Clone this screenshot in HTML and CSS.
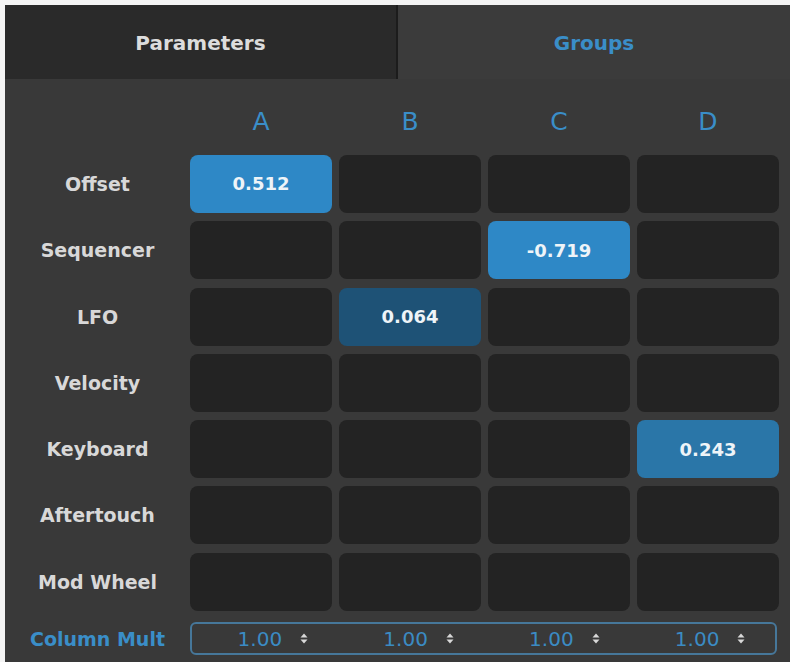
FILE: index.html
```html
<!DOCTYPE html>
<html>
<head>
<meta charset="utf-8">
<link rel="stylesheet" href="styles.css">
</head>
<body>
<div class="panel">
  <div class="tabs">
    <div class="tab tab-params">Parameters</div>
    <div class="tab tab-groups">Groups</div>
  </div>
  <div class="matrix">
    <div class="corner"></div>
    <div class="colhead">A</div>
    <div class="colhead">B</div>
    <div class="colhead">C</div>
    <div class="colhead">D</div>

    <div class="label">Offset</div>
    <div class="cell on bright">0.512</div>
    <div class="cell"></div>
    <div class="cell"></div>
    <div class="cell"></div>

    <div class="label">Sequencer</div>
    <div class="cell"></div>
    <div class="cell"></div>
    <div class="cell on bright">-0.719</div>
    <div class="cell"></div>

    <div class="label">LFO</div>
    <div class="cell"></div>
    <div class="cell on dim">0.064</div>
    <div class="cell"></div>
    <div class="cell"></div>

    <div class="label">Velocity</div>
    <div class="cell"></div>
    <div class="cell"></div>
    <div class="cell"></div>
    <div class="cell"></div>

    <div class="label">Keyboard</div>
    <div class="cell"></div>
    <div class="cell"></div>
    <div class="cell"></div>
    <div class="cell on mid">0.243</div>

    <div class="label">Aftertouch</div>
    <div class="cell"></div>
    <div class="cell"></div>
    <div class="cell"></div>
    <div class="cell"></div>

    <div class="label">Mod Wheel</div>
    <div class="cell"></div>
    <div class="cell"></div>
    <div class="cell"></div>
    <div class="cell"></div>
  </div>
  <div class="multrow">
    <div class="multlabel">Column Mult</div>
    <div class="multbox">
      <div class="mult"><span class="num">1.00</span><svg class="spin" width="8" height="11" viewBox="0 0 8 11"><path d="M4 0.5 L7.5 4.5 L0.5 4.5 Z M4 10.5 L7.5 6.5 L0.5 6.5 Z" fill="#d8d8d8"/></svg></div>
      <div class="mult"><span class="num">1.00</span><svg class="spin" width="8" height="11" viewBox="0 0 8 11"><path d="M4 0.5 L7.5 4.5 L0.5 4.5 Z M4 10.5 L7.5 6.5 L0.5 6.5 Z" fill="#d8d8d8"/></svg></div>
      <div class="mult"><span class="num">1.00</span><svg class="spin" width="8" height="11" viewBox="0 0 8 11"><path d="M4 0.5 L7.5 4.5 L0.5 4.5 Z M4 10.5 L7.5 6.5 L0.5 6.5 Z" fill="#d8d8d8"/></svg></div>
      <div class="mult"><span class="num">1.00</span><svg class="spin" width="8" height="11" viewBox="0 0 8 11"><path d="M4 0.5 L7.5 4.5 L0.5 4.5 Z M4 10.5 L7.5 6.5 L0.5 6.5 Z" fill="#d8d8d8"/></svg></div>
    </div>
  </div>
</div>
</body>
</html>
```

FILE: styles.css
```css
html, body {
  margin: 0;
  padding: 0;
  background: #f4f4f4;
  width: 790px;
  height: 662px;
  overflow: hidden;
}

body {
  font-family: "DejaVu Sans", "Liberation Sans", sans-serif;
}

.panel {
  margin: 5px 0 0 5px;
  width: 785px;
  height: 657px;
  background: #393939;
  display: flex;
  flex-direction: column;
}

.tabs {
  display: flex;
  height: 74px;
}

.tab {
  display: flex;
  align-items: center;
  justify-content: center;
  font-size: 20px;
  font-weight: 700;
  padding-top: 2px;
  box-sizing: border-box;
}

.tab-params {
  width: 393px;
  background: #2a2a2a;
  color: #dcdcdc;
  border-right: 2px solid #1c1c1c;
}

.tab-groups {
  flex: 1;
  background: #3b3b3b;
  color: #3a8ec8;
}

.matrix {
  display: grid;
  grid-template-columns: 178px repeat(4, 142px);
  grid-template-rows: 67.7px repeat(7, 58px);
  column-gap: 7px;
  row-gap: 8.3px;
  padding-right: 7px;
}

.colhead {
  display: flex;
  align-items: center;
  justify-content: center;
  color: #3a8ec8;
  font-size: 25px;
  font-weight: 400;
  padding-top: 18px;
}

.label {
  display: flex;
  align-items: center;
  justify-content: center;
  color: #d8d8d8;
  font-size: 19px;
  font-weight: 700;
  padding-left: 7px;
}

.cell {
  background: #232323;
  border-radius: 8px;
  display: flex;
  align-items: center;
  justify-content: center;
  color: #eef4f8;
  font-size: 18px;
  font-weight: 700;
}

.cell.bright {
  background: #2e88c6;
}

.cell.mid {
  background: #2a76a8;
}

.cell.dim {
  background: #1e5276;
}

.multrow {
  display: flex;
  align-items: center;
  margin-top: 11px;
  height: 34px;
}

.multlabel {
  width: 185px;
  text-align: center;
  color: #3a8ec8;
  font-size: 19px;
  font-weight: 700;
}

.multbox {
  width: 587px;
  height: 33px;
  box-sizing: border-box;
  border: 2px solid #46779a;
  border-radius: 6px;
  display: grid;
  grid-template-columns: repeat(4, 1fr);
}

.mult {
  display: flex;
  align-items: center;
  justify-content: center;
  gap: 18px;
  padding-left: 16px;
}

.num {
  color: #3b8bc3;
  font-size: 20px;
  font-weight: 400;
}

.spin {
  display: block;
}
```
